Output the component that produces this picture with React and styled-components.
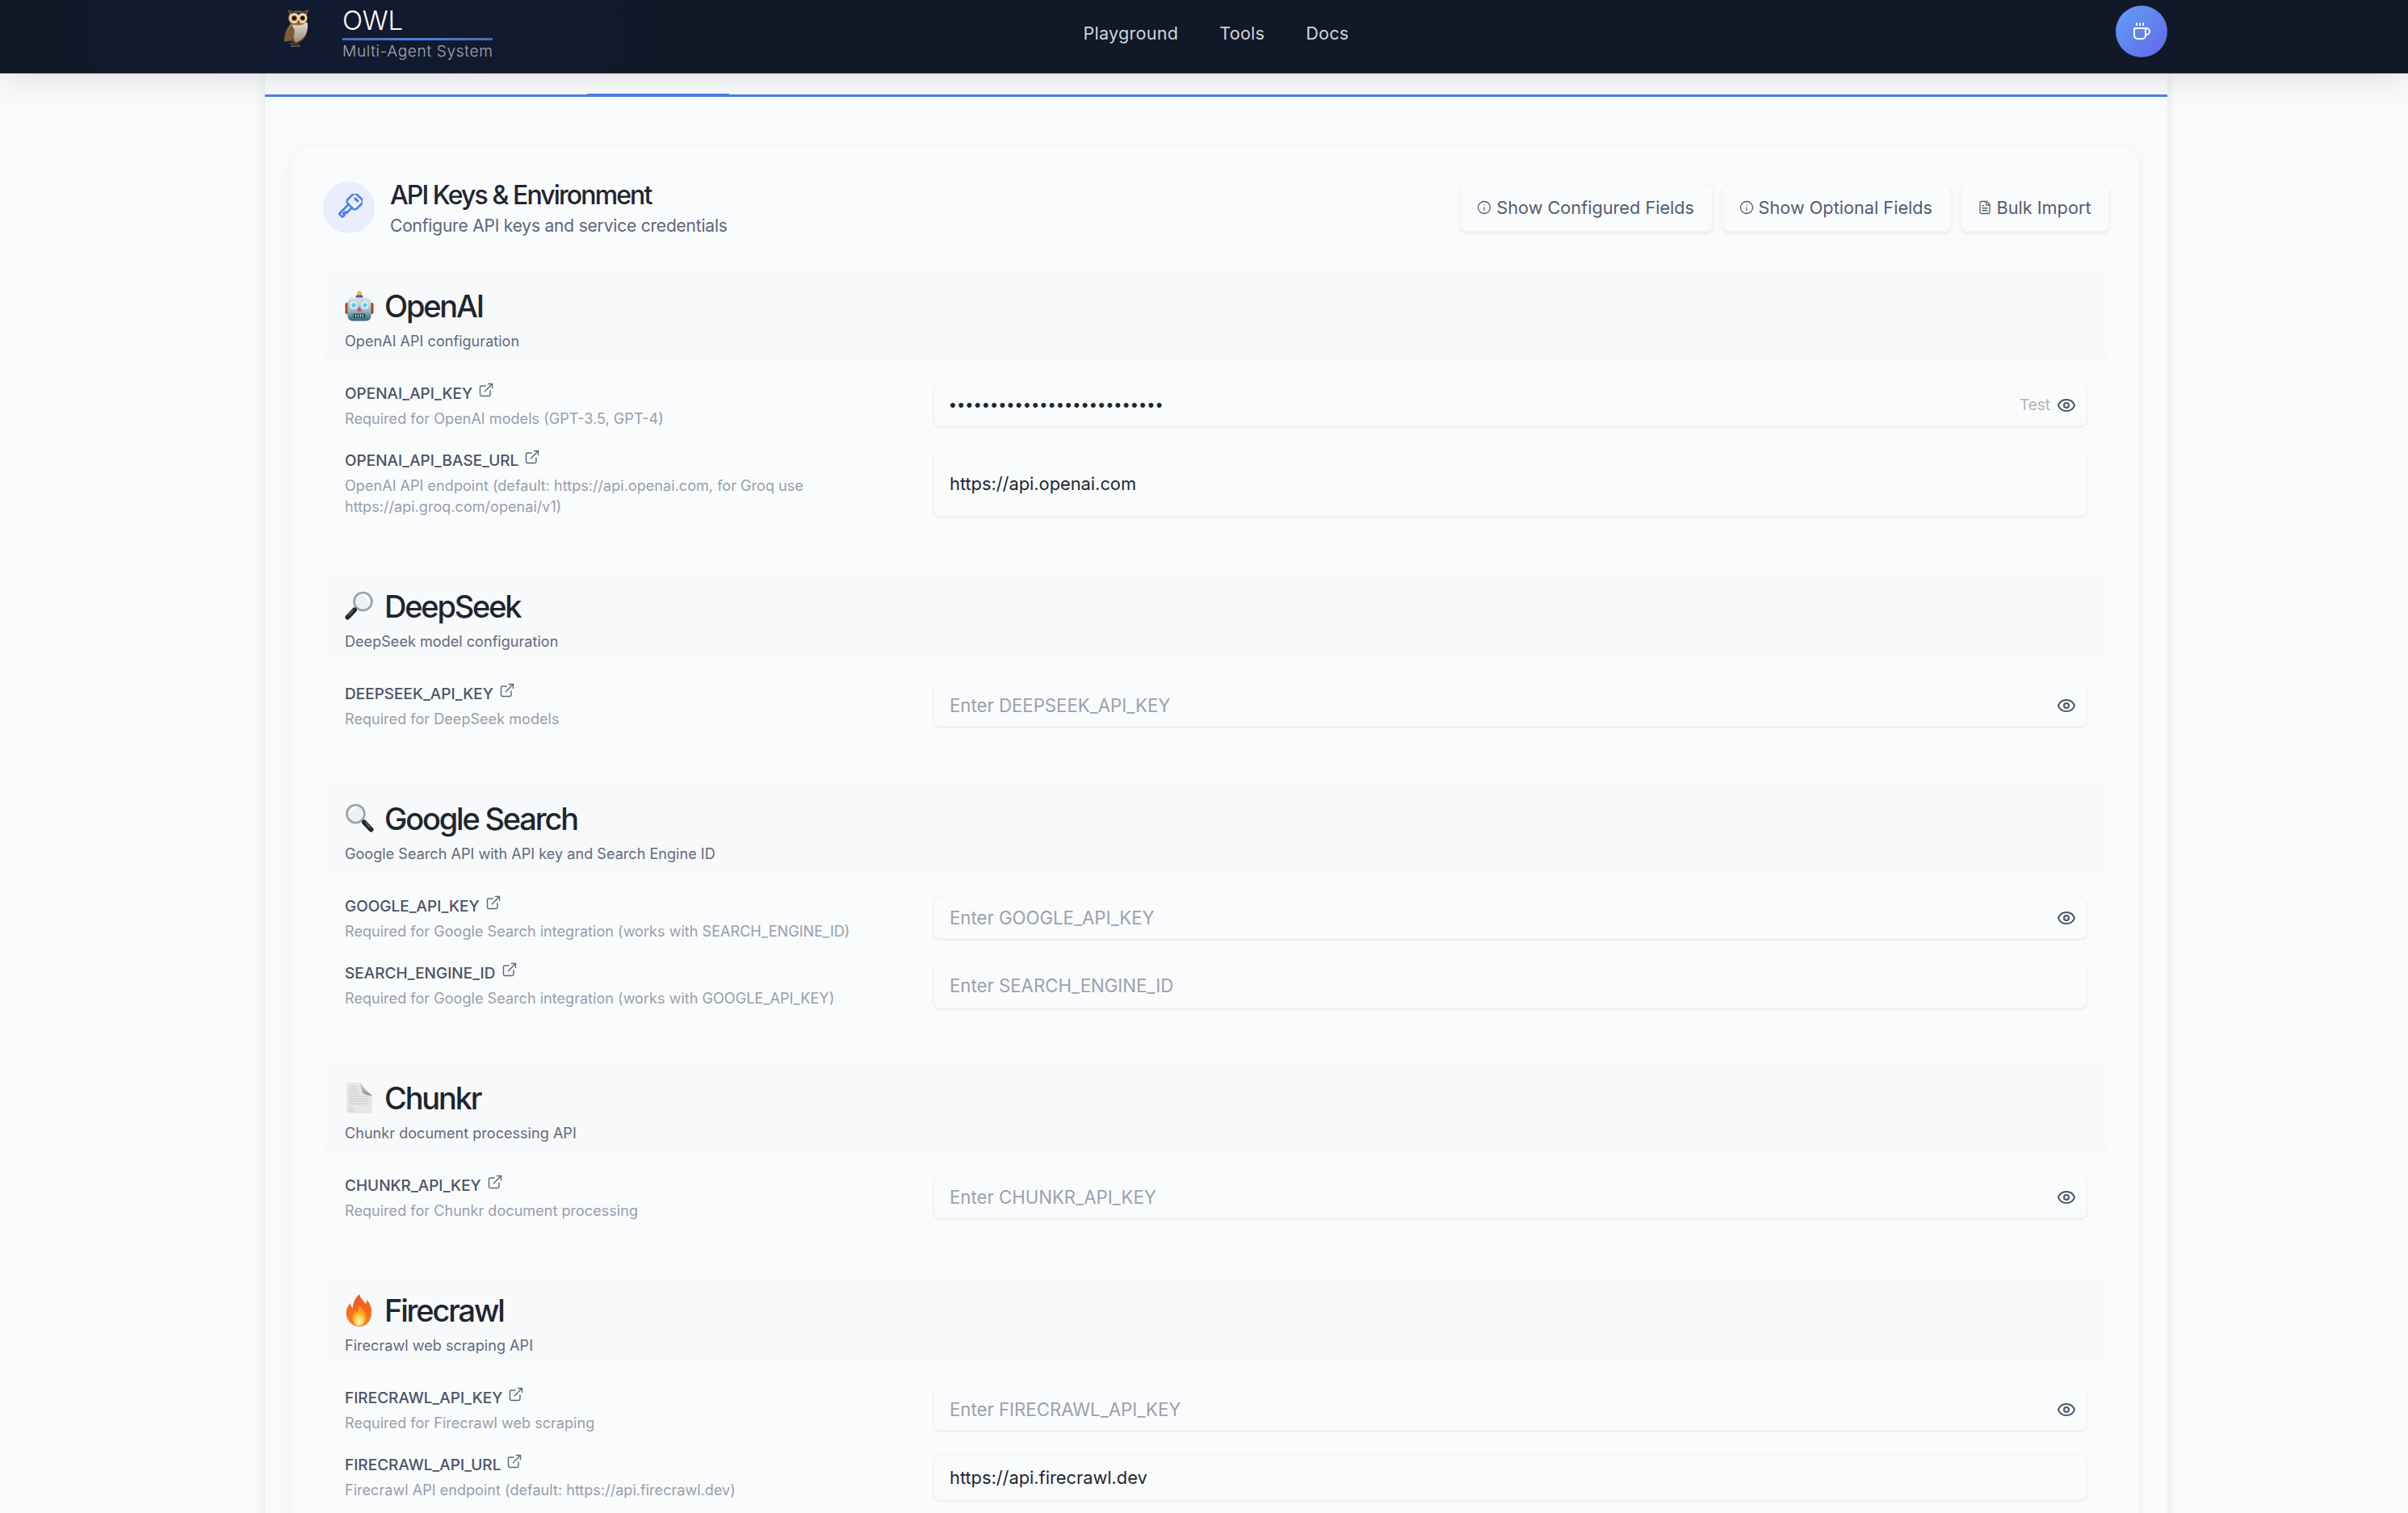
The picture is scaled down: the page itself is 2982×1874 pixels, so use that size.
import React from 'react';
import styled, { createGlobalStyle } from 'styled-components';
import { Coffee, Eye, ExternalLink, Info, FileText } from 'lucide-react';

const Global = createGlobalStyle`
  html, body { margin: 0; padding: 0; background: #f9fafc; }
  body { font-family: Inter, "Noto Sans", sans-serif; overflow: hidden; height: 1874px; }
  * { box-sizing: border-box; }
`;

const Page = styled.div`
  height: 1874px;
  overflow: hidden;
  background: #f9fafc;
  position: relative;
`;
const TopBar = styled.header`
  height: 91px;
  padding-left: 30px;
  background: linear-gradient(90deg, #111827 0%, #121a30 14%, #111827 30%);
  border-bottom: 1px solid #2a2f3d;
  box-shadow: 0 2px 44px rgba(0, 0, 0, 0.13);
  position: relative;
  z-index: 2;
`;
const TopInner = styled.div`
  width: 2356px;
  height: 90px;
  margin: 0 auto;
  display: grid;
  grid-template-columns: 1fr auto 1fr;
  align-items: center;
`;
const Brand = styled.div`
  display: flex;
  align-items: flex-start;
  gap: 36px;
  height: 90px;
  padding: 8px 0 0 22px;
`;
const OwlSlot = styled.div`
  padding-top: 3px;
`;
const BrandText = styled.div`
  display: flex;
  flex-direction: column;
  width: 186px;
`;
const BrandName = styled.div`
  font-size: 33px;
  line-height: 34px;
  font-weight: 300;
  letter-spacing: -0.2px;
  color: #fff;
  height: 39px;
`;
const BrandRule = styled.div`
  height: 3px;
  background: linear-gradient(90deg, #4a6cae, #4b7fe8 50%, #4a6cae);
`;
const BrandSub = styled.div`
  margin-top: 1px;
  font-size: 19.2px;
  line-height: 24px;
  font-weight: 300;
  letter-spacing: 0.6px;
  white-space: nowrap;
  color: #a3a8b3;
`;
const Nav = styled.nav`
  display: flex;
  gap: 51px;
  margin-top: -8px;
`;
const NavLink = styled.a`
  font-size: 21.5px;
  letter-spacing: 0.3px;
  color: #d1d5db;
`;
const CoffeeButton = styled.button`
  justify-self: end;
  width: 64px;
  height: 64px;
  margin-top: -13px;
  border: 0;
  border-radius: 50%;
  color: #fff;
  background: linear-gradient(135deg, #60a0f6, #6366e8);
  display: flex;
  align-items: center;
  justify-content: center;
`;
const Frame = styled.main`
  padding-left: 30px;
`;
const Panel = styled.div`
  width: 2356px;
  margin: 0 auto;
  background: #f9fafc;
  box-shadow: 0 0 12px rgba(0, 0, 0, 0.09);
`;
const TabStrip = styled.div`
  height: 29px;
  padding-left: 399px;
  border-bottom: 3px solid #4e7ee8;
  display: flex;
  align-items: flex-end;
`;
const ActiveTab = styled.div`
  width: 176px;
  height: 4px;
  margin-bottom: -3px;
  background: #4e7ee8;
`;
const Wrap = styled.div`
  padding: 60px 35px 0 33px;
`;
const Card = styled.section`
  border-radius: 24px 24px 0 0;
  border: 1px solid #f6f7f8;
  background: #fafbfd;
  box-shadow: 0 3px 14px rgba(0, 0, 0, 0.05);
  padding: 44px 36px 40px 38px;
`;
const CardHead = styled.div`
  display: flex;
  align-items: center;
  justify-content: space-between;
  height: 64px;
  margin-bottom: 44px;
`;
const CardTitleGroup = styled.div`
  display: flex;
  align-items: center;
  gap: 19px;
`;
const CardTitleText = styled.div`
  padding-top: 3px;
`;
const KeyBadge = styled.div`
  width: 64px;
  height: 64px;
  border-radius: 50%;
  background: #e8eefb;
  display: flex;
  align-items: center;
  justify-content: center;
`;
const CardTitle = styled.h1`
  margin: 0;
  font-size: 32px;
  line-height: 38px;
  font-weight: 500;
  letter-spacing: -1.9px;
  color: #1f2530;
`;
const CardSub = styled.p`
  margin: 4px 0 0;
  font-size: 21px;
  line-height: 30px;
  letter-spacing: -0.2px;
  color: #5d6678;
`;
const Actions = styled.div`
  display: flex;
  gap: 12px;
`;
const ActionButton = styled.button`
  height: 59px;
  padding: 0 21.5px 0 20px;
  border: 1px solid #f5f6f7;
  border-radius: 8px;
  background: #fafbfc;
  box-shadow: 0 2px 5px rgba(0, 0, 0, 0.08);
  color: #545c6e;
  font: 400 21.7px Inter, sans-serif;
  display: flex;
  align-items: center;
  gap: 6px;
  white-space: nowrap;
`;
const Section = styled.section`
  margin-bottom: 39px;
`;
const SectionHead = styled.div`
  height: 113px;
  padding: 24px 27px 0 27px;
  border-radius: 16px 16px 0 0;
  background: #f8f9fa;
  border-bottom: 1px solid #f6f7f9;
`;
const SectionTitle = styled.h2`
  margin: 0;
  display: flex;
  align-items: center;
  gap: 13px;
  height: 44px;
  font-size: 38px;
  font-weight: 500;
  letter-spacing: -2.2px;
  color: #1f2530;
`;
const SectionDesc = styled.p`
  margin: 7px 0 0;
  font-size: 18.1px;
  line-height: 28px;
  color: #626a7c;
`;
const SectionBody = styled.div`
  padding: 29px 27px 25px 26px;
  border-radius: 0 0 16px 16px;
  border: 1px solid #f6f7f9;
  border-top: 0;
  display: flex;
  flex-direction: column;
  gap: 27px;
`;
const Row = styled.div`
  display: grid;
  grid-template-columns: 716px 1fr;
  column-gap: 13px;
  align-items: stretch;
`;
const LabelLine = styled.div`
  display: flex;
  align-items: flex-start;
  gap: 7px;
  height: 26px;
  font-size: 19px;
  line-height: 26px;
  font-weight: 500;
  color: #4b5365;
`;
const LinkIcon = styled(ExternalLink)`
  color: #5d6678;
  margin-top: -2px;
`;
const FieldHelp = styled.p`
  margin: 4px 0 0;
  font-size: 18.1px;
  line-height: 26px;
  color: #989eaa;
`;
const FieldBox = styled.div`
  position: relative;
  height: ${(p) => (p.$secret ? '53px' : 'auto')};
  min-height: 53px;
  display: flex;
`;
const FieldInput = styled.input`
  flex: 1;
  min-width: 0;
  padding: 0 90px 0 19px;
  border: 1px solid #f5f6f8;
  border-radius: 8px;
  background: #fafbfd;
  box-shadow: 0 1px 3px rgba(0, 0, 0, 0.09);
  outline: none;
  font: 400 21.8px Inter, sans-serif;
  color: #1f2530;
  &[type='password']:not(:placeholder-shown) {
    font-family: 'Liberation Sans', sans-serif;
    letter-spacing: 2.6px;
  }
  &::placeholder {
    color: #9ca1ad;
    font-size: 22.2px;
  }
`;
const FieldTools = styled.div`
  position: absolute;
  right: 13px;
  top: 0;
  height: 100%;
  display: flex;
  align-items: center;
  gap: 8px;
`;
const TestTag = styled.span`
  font-size: 19px;
  color: #b0b4bd;
`;
const EyeIcon = styled(Eye)`
  color: #4b5365;
  margin-top: 1px;
`;

function KeyGlyph() {
  return (
    <svg width="34" height="34" viewBox="0 0 34 34" fill="none" stroke="#4e7ee8" strokeWidth="2.6" strokeLinejoin="round" strokeLinecap="round">
      <g transform="rotate(45 17 17)">
        <rect x="9" y="-1.5" width="16" height="16" rx="4" />
        <rect x="14" y="2.6" width="6" height="2" rx="0.6" fill="#4e7ee8" strokeWidth="1" />
        <path d="M14 14.5V29.5a1.6 1.6 0 0 0 1.6 1.6h2.6a1.6 1.6 0 0 0 1.6-1.6v-2.2h-2.4v-3.2h2.4v-9.6" />
      </g>
    </svg>
  );
}

function OwlGlyph() {
  return (
    <svg width="38" height="50" viewBox="0 0 34 48">
      <defs>
        <linearGradient id="owlBody" x1="0" y1="0" x2="0" y2="1">
          <stop offset="0" stopColor="#a3835c" />
          <stop offset="1" stopColor="#5e4126" />
        </linearGradient>
        <linearGradient id="owlBelly" x1="0" y1="0" x2="0" y2="1">
          <stop offset="0" stopColor="#e6dfd2" />
          <stop offset="1" stopColor="#9b8a76" />
        </linearGradient>
      </defs>
      <path d="M9 17C3 24 0 31 1 39c5-1 9-2 12 2 7 0 13-6 15-14 1-5 1-8 0-11z" fill="url(#owlBody)" />
      <path d="M11 19c-1 8 0 14 3 21 7-2 13-8 14-16 1-3 0-6 0-8z" fill="url(#owlBelly)" />
      <path d="M9 20C4 26 1 32 1 39c5 0 9-2 11-7 2-5 1-9-3-12z" fill="#7c5a37" />
      <path d="M5 1l7 2c3-1 7-1 10 0l8-2-3 6c1 3 1 6-1 9-3 4-13 5-18 1C5 14 5 9 7 6z" fill="#8f6f4b" />
      <path d="M5 1l8 3c3-1 6-1 9 0l8-3-6 6H10z" fill="#4b3a2a" />
      <ellipse cx="12.500" cy="11" rx="6" ry="6" fill="#eddfc2" />
      <ellipse cx="22.500" cy="11" rx="5.500" ry="6" fill="#eddfc2" />
      <circle cx="12.500" cy="11" r="3.600" fill="#b87a23" />
      <circle cx="22.500" cy="11" r="3.400" fill="#b87a23" />
      <circle cx="12.500" cy="11" r="2.400" fill="#14100c" />
      <circle cx="22.500" cy="11" r="2.300" fill="#14100c" />
      <path d="M16 14h3l-1.500 4z" fill="#5b5148" />
      <path d="M11 41h-5M11 41l-1 3M13 40.500v3.500M8 44.500h11M15 41l4 3" stroke="#6f6354" strokeWidth="1" fill="none" />
    </svg>
  );
}

function RobotGlyph() {
  return (
    <svg width="36" height="38" viewBox="0 0 36 38">
      <defs>
        <linearGradient id="robotHead" x1="0" y1="0" x2="0" y2="1">
          <stop offset="0" stopColor="#d7e5ea" />
          <stop offset="0.55" stopColor="#9cbcc6" />
          <stop offset="1" stopColor="#2f6676" />
        </linearGradient>
      </defs>
      <rect x="0.5" y="15" width="5" height="14" rx="2" fill="#b33a33" />
      <rect x="30.500" y="15" width="5" height="14" rx="2" fill="#b33a33" />
      <circle cx="18" cy="3.500" r="3" fill="#f5b93c" />
      <rect x="13.500" y="5.500" width="9" height="3.500" rx="1.500" fill="#5a4fc4" />
      <rect x="3.500" y="8.500" width="29" height="29" rx="6" fill="url(#robotHead)" />
      <circle cx="11" cy="18" r="4.600" fill="#e8f7fb" />
      <circle cx="25" cy="18" r="4.600" fill="#e8f7fb" />
      <circle cx="11" cy="18" r="2.800" fill="#5cc6ea" />
      <circle cx="25" cy="18" r="2.800" fill="#5cc6ea" />
      <path d="M18 19.500l3 6h-6z" fill="#d9443e" />
      <rect x="10.500" y="28.500" width="15" height="5" rx="1.500" fill="#23434e" />
      <path d="M13.500 29.500v3M16.500 29.500v3M19.500 29.500v3M22.500 29.500v3" stroke="#dfe7ea" strokeWidth="1.300" />
    </svg>
  );
}

function LensGlyph({ flip }) {
  return (
    <svg width="36" height="38" viewBox="0 0 36 38">
      <g transform={flip ? 'translate(36 0) scale(-1 1)' : undefined}>
        <circle cx="13.500" cy="13" r="11" fill="#eef0f2" stroke="#9aa3a8" strokeWidth="2.600" />
        <path d="M6 13a8 8 0 0 1 8-8" stroke="#fff" strokeWidth="2.500" fill="none" />
        <path d="M21.500 21l3 3" stroke="#8d959a" strokeWidth="3" />
        <path d="M24 23.500l8.500 9" stroke="#24272b" strokeWidth="6" strokeLinecap="round" />
        <path d="M25.500 23.500l6 6.500" stroke="#6a7076" strokeWidth="1.200" />
      </g>
    </svg>
  );
}

function PageGlyph() {
  return (
    <svg width="36" height="40" viewBox="0 0 36 40">
      <defs>
        <linearGradient id="pageFold" x1="0" y1="0" x2="1" y2="1">
          <stop offset="0" stopColor="#d7d7d7" />
          <stop offset="1" stopColor="#7e7e7e" />
        </linearGradient>
      </defs>
      <path d="M2 1h17c3 6 8 11 15 15v23H2z" fill="#e6e7e8" />
      <path d="M19 0c0 7 3 14 3 14 4 2 8 3 12 3C27 12 23 7 19 0z" fill="url(#pageFold)" />
      <path d="M5 6h10M5 9h11M5 12h12M5 15h13M5 18h25M5 21h25M5 24h25M5 27h23M5 33h6M5 36h8" stroke="#c6c7c9" strokeWidth="1" />
    </svg>
  );
}

function FireGlyph() {
  return (
    <svg width="36" height="40" viewBox="0 0 36 40">
      <defs>
        <radialGradient id="fireCore" cx="0.5" cy="0.85" r="0.55">
          <stop offset="0" stopColor="#fff7c4" />
          <stop offset="0.6" stopColor="#ffcf3f" />
          <stop offset="1" stopColor="#ff9a1f" />
        </radialGradient>
        <linearGradient id="fireOuter" x1="0" y1="0" x2="0" y2="1">
          <stop offset="0" stopColor="#f0561d" />
          <stop offset="1" stopColor="#f9821f" />
        </linearGradient>
      </defs>
      <path d="M18 0c1 5 5 8 8 12 1-2 1-3 1-5 5 5 7 12 6 18-1 9-7 15-15 15S3 34 2 26c-1-5 1-11 5-15 0 3 1 5 3 6 0-7 3-12 8-17z" fill="url(#fireOuter)" />
      <path d="M18 13c1 4 5 6 7 10 3 6 0 16-7 16S8 31 10 25c1-3 3-4 4-5 0 2 1 3 2 3 0-4 0-7 2-10z" fill="url(#fireCore)" />
    </svg>
  );
}

const sections = [
  {
    glyph: <RobotGlyph />, name: 'OpenAI', desc: 'OpenAI API configuration',
    fields: [
      { key: 'OPENAI_API_KEY', help: 'Required for OpenAI models (GPT-3.5, GPT-4)', secret: true, test: true, value: 'xxxxxxxxxxxxxxxxxxxxxxxxxx' },
      { key: 'OPENAI_API_BASE_URL', help: 'OpenAI API endpoint (default: https://api.openai.com, for Groq use https://api.groq.com/openai/v1)', value: 'https://api.openai.com' },
    ],
  },
  {
    glyph: <LensGlyph flip />, name: 'DeepSeek', desc: 'DeepSeek model configuration',
    fields: [{ key: 'DEEPSEEK_API_KEY', help: 'Required for DeepSeek models', secret: true }],
  },
  {
    glyph: <LensGlyph />, name: 'Google Search', desc: 'Google Search API with API key and Search Engine ID',
    fields: [
      { key: 'GOOGLE_API_KEY', help: 'Required for Google Search integration (works with SEARCH_ENGINE_ID)', secret: true },
      { key: 'SEARCH_ENGINE_ID', help: 'Required for Google Search integration (works with GOOGLE_API_KEY)' },
    ],
  },
  {
    glyph: <PageGlyph />, name: 'Chunkr', desc: 'Chunkr document processing API',
    fields: [{ key: 'CHUNKR_API_KEY', help: 'Required for Chunkr document processing', secret: true }],
  },
  {
    glyph: <FireGlyph />, name: 'Firecrawl', desc: 'Firecrawl web scraping API',
    fields: [
      { key: 'FIRECRAWL_API_KEY', help: 'Required for Firecrawl web scraping', secret: true },
      { key: 'FIRECRAWL_API_URL', help: 'Firecrawl API endpoint (default: https://api.firecrawl.dev)', value: 'https://api.firecrawl.dev' },
    ],
  },
];

function Field({ field }) {
  return (
    <Row>
      <div>
        <LabelLine>
          {field.key}
          <LinkIcon size={20} strokeWidth={1.7} />
        </LabelLine>
        <FieldHelp>{field.help}</FieldHelp>
      </div>
      <FieldBox $secret={field.secret}>
        <FieldInput
          readOnly
          type={field.secret ? 'password' : 'text'}
          value={field.value || ''}
          placeholder={`Enter ${field.key}`}
        />
        {field.secret && (
          <FieldTools>
            {field.test && <TestTag>Test</TestTag>}
            <EyeIcon size={24} strokeWidth={2} />
          </FieldTools>
        )}
      </FieldBox>
    </Row>
  );
}

export default function App() {
  return (
    <Page>
      <Global />
      <TopBar>
        <TopInner>
          <Brand>
            <OwlSlot><OwlGlyph /></OwlSlot>
            <BrandText>
              <BrandName>OWL</BrandName>
              <BrandRule />
              <BrandSub>Multi-Agent System</BrandSub>
            </BrandText>
          </Brand>
          <Nav>
            <NavLink>Playground</NavLink>
            <NavLink>Tools</NavLink>
            <NavLink>Docs</NavLink>
          </Nav>
          <CoffeeButton aria-label="Buy coffee">
            <Coffee size={24} strokeWidth={2} />
          </CoffeeButton>
        </TopInner>
      </TopBar>
      <Frame>
        <Panel>
          <TabStrip>
            <ActiveTab />
          </TabStrip>
          <Wrap>
            <Card>
              <CardHead>
                <CardTitleGroup>
                  <KeyBadge>
                    <KeyGlyph />
                  </KeyBadge>
                  <CardTitleText>
                    <CardTitle>API Keys &amp; Environment</CardTitle>
                    <CardSub>Configure API keys and service credentials</CardSub>
                  </CardTitleText>
                </CardTitleGroup>
                <Actions>
                  <ActionButton><Info size={18} strokeWidth={1.7} />Show Configured Fields</ActionButton>
                  <ActionButton><Info size={18} strokeWidth={1.7} />Show Optional Fields</ActionButton>
                  <ActionButton><FileText size={18} strokeWidth={1.7} />Bulk Import</ActionButton>
                </Actions>
              </CardHead>
              {sections.map((s) => (
                <Section key={s.name}>
                  <SectionHead>
                    <SectionTitle>{s.glyph}{s.name}</SectionTitle>
                    <SectionDesc>{s.desc}</SectionDesc>
                  </SectionHead>
                  <SectionBody>
                    {s.fields.map((f) => <Field key={f.key} field={f} />)}
                  </SectionBody>
                </Section>
              ))}
            </Card>
          </Wrap>
        </Panel>
      </Frame>
    </Page>
  );
}
